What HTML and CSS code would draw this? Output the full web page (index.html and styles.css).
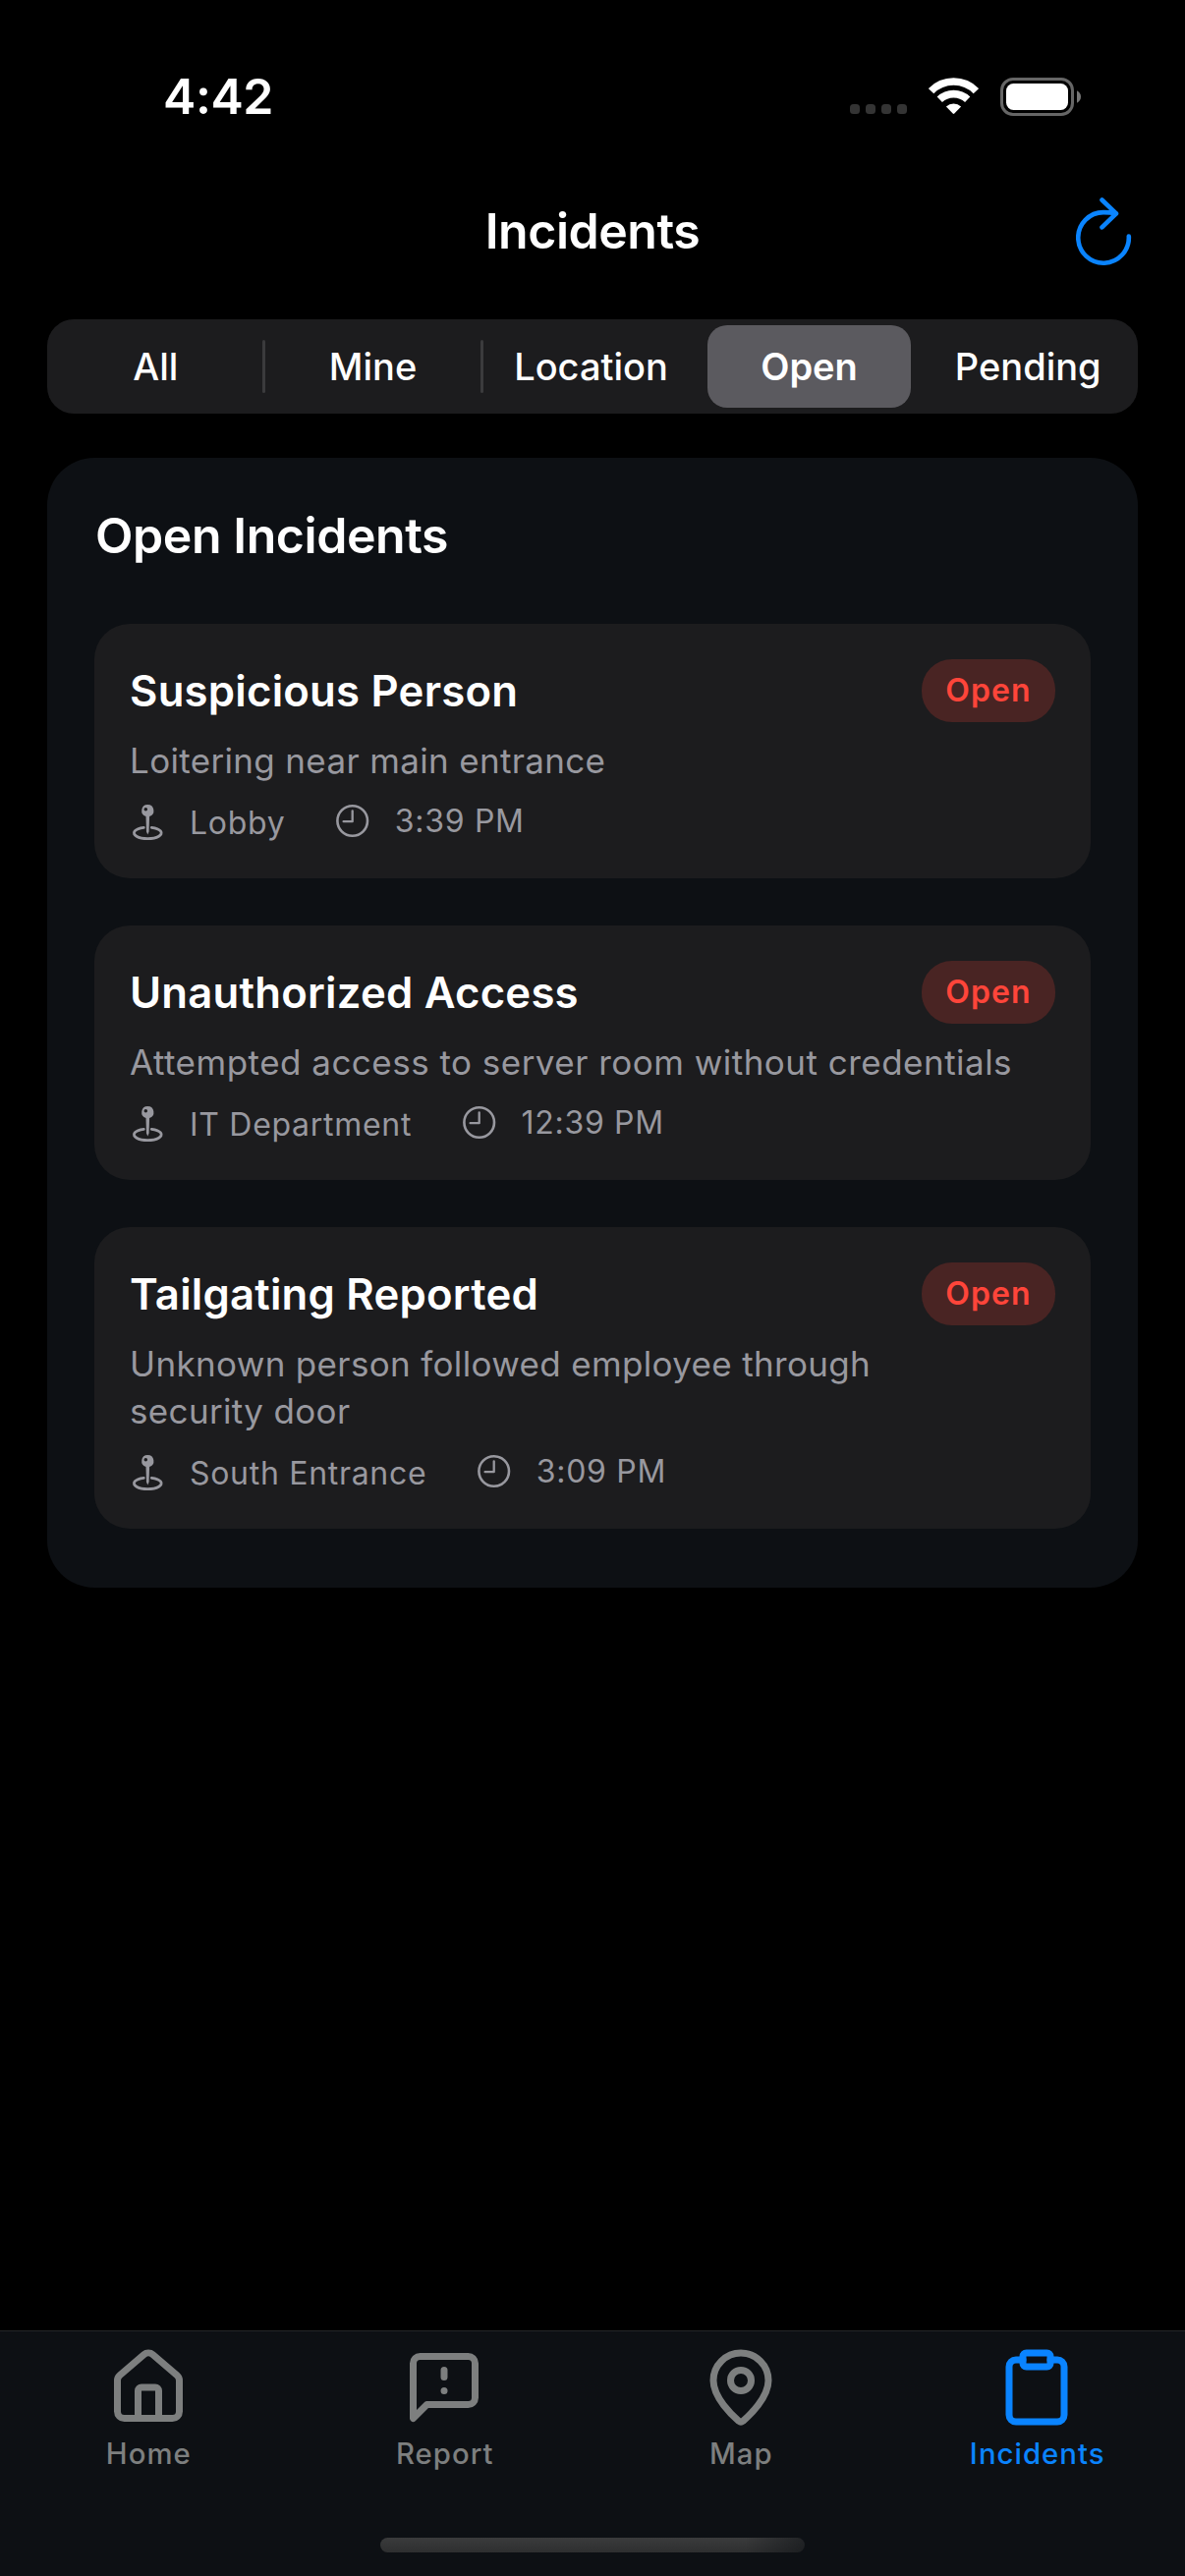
FILE: index.html
```html
<!DOCTYPE html>
<html lang="en">
<head>
<meta charset="utf-8">
<title>Incidents</title>
<link rel="stylesheet" href="styles.css">
</head>
<body>
<svg class="sprite" aria-hidden="true">
  <symbol id="pin" viewBox="0 0 37 41">
    <path fill="currentColor" fill-rule="evenodd" d="M18.3 1.9a6.2 6.2 0 0 1 1.8 12.1l-.5 15.4-1.3 3-1.3-3-.5-15.4A6.2 6.2 0 0 1 18.3 1.9zM16.3 4.9a1.8 1.8 0 1 0 0 3.6a1.8 1.8 0 1 0 0-3.6z"/>
    <path fill="none" stroke="currentColor" stroke-width="2.8" stroke-linecap="round" d="M14.3 25.3A13.9 5.8 0 1 0 22.3 25.3"/>
  </symbol>
  <symbol id="clock" viewBox="0 0 37 37">
    <g fill="none" stroke="currentColor" stroke-width="2.6" stroke-linecap="round" stroke-linejoin="round">
      <circle cx="18.7" cy="18.5" r="15.3"/>
      <path stroke-width="2.3" d="M18.7 8.3v10.9H9.6"/>
    </g>
  </symbol>
</svg>

<div class="screen">
  <div class="status">
    <span class="status-time">4:42</span>
    <div class="status-icons">
      <svg width="58" height="38" viewBox="0 0 58 38" fill="#343434">
        <rect x="0" y="27" width="10" height="10" rx="3.5"/>
        <rect x="16" y="27" width="10" height="10" rx="3.5"/>
        <rect x="32" y="27" width="10" height="10" rx="3.5"/>
        <rect x="48" y="27" width="10" height="10" rx="3.5"/>
      </svg>
      <svg width="51" height="38" viewBox="0 0 51 38">
        <g fill="none" stroke="#fff" stroke-width="7.6">
          <path d="M2.6 13.7A32 32 0 0 1 48.4 13.7"/>
          <path d="M11.3 22.3A20.5 20.5 0 0 1 39.7 22.3"/>
        </g>
        <path fill="#fff" d="M17.9 29.6A11 11 0 0 1 33.1 29.6L26.3 36.6Q25.5 37.4 24.7 36.6Z"/>
      </svg>
      <svg width="82" height="39" viewBox="0 0 82 39">
        <rect x="1.5" y="1.5" width="72" height="36" rx="11.5" fill="none" stroke="#666" stroke-width="3"/>
        <rect x="6" y="6" width="63" height="27" rx="7.5" fill="#fff"/>
        <path fill="#777" d="M78 13.2q4 2.2 4 6.3t-4 6.3z"/>
      </svg>
    </div>
  </div>

  <header class="nav">
    <h1 class="nav-title">Incidents</h1>
    <svg class="nav-refresh" width="57" height="70" viewBox="0 0 57 70">
      <path d="M53.8 39.5A25.8 25.8 0 1 1 28 15.1Q35 15.1 41 16.3M26.5 2.5L41 16.4 26.5 30.3"/>
    </svg>
  </header>

  <nav class="segments">
    <span class="segment segment-divided">All</span>
    <span class="segment segment-divided">Mine</span>
    <span class="segment">Location</span>
    <span class="segment segment-active">Open</span>
    <span class="segment segment-wide">Pending</span>
  </nav>

  <main class="panel">
    <h2 class="panel-title">Open Incidents</h2>
    <div class="cards">
      <article class="card">
        <div class="card-head"><h3 class="card-title">Suspicious Person</h3><span class="badge">Open</span></div>
        <p class="card-text">Loitering near main entrance</p>
        <div class="meta">
          <span class="meta-place"><svg width="37" height="41"><use href="#pin"/></svg>Lobby</span>
          <span class="meta-time"><svg width="37" height="37"><use href="#clock"/></svg>3:39 PM</span>
        </div>
      </article>
      <article class="card">
        <div class="card-head"><h3 class="card-title">Unauthorized Access</h3><span class="badge">Open</span></div>
        <p class="card-text card-text-long">Attempted access to server room without credentials</p>
        <div class="meta">
          <span class="meta-place"><svg width="37" height="41"><use href="#pin"/></svg>IT Department</span>
          <span class="meta-time"><svg width="37" height="37"><use href="#clock"/></svg>12:39 PM</span>
        </div>
      </article>
      <article class="card">
        <div class="card-head"><h3 class="card-title">Tailgating Reported</h3><span class="badge">Open</span></div>
        <p class="card-text">Unknown person followed employee through<br>security door</p>
        <div class="meta">
          <span class="meta-place"><svg width="37" height="41"><use href="#pin"/></svg>South Entrance</span>
          <span class="meta-time"><svg width="37" height="37"><use href="#clock"/></svg>3:09 PM</span>
        </div>
      </article>
    </div>
  </main>

  <footer class="tabbar">
    <div class="tabs">
      <div class="tab">
        <svg class="tab-icon" viewBox="0 0 24 24">
          <path d="M15 21v-8a1 1 0 0 0-1-1h-4a1 1 0 0 0-1 1v8"/>
          <path d="M3 10a2 2 0 0 1 .709-1.528l7-5.999a2 2 0 0 1 2.582 0l7 5.999A2 2 0 0 1 21 10v9a2 2 0 0 1-2 2H5a2 2 0 0 1-2-2z"/>
        </svg>
        <span class="tab-label">Home</span>
      </div>
      <div class="tab">
        <svg class="tab-icon" viewBox="0 0 24 24">
          <path d="M21 15a2 2 0 0 1-2 2H7l-4 4V5a2 2 0 0 1 2-2h14a2 2 0 0 1 2 2z"/>
          <path d="M12 7v2M12 13h.01"/>
        </svg>
        <span class="tab-label">Report</span>
      </div>
      <div class="tab">
        <svg class="tab-icon" viewBox="0 0 24 24">
          <path d="M20 10c0 4.993-5.539 10.193-7.399 11.799a1 1 0 0 1-1.202 0C9.539 20.193 4 14.993 4 10a8 8 0 0 1 16 0"/>
          <circle cx="12" cy="10" r="3"/>
        </svg>
        <span class="tab-label">Map</span>
      </div>
      <div class="tab tab-active">
        <svg class="tab-icon" viewBox="0 0 24 24">
          <rect x="8" y="2" width="8" height="4" rx="1"/>
          <path d="M16 4h2a2 2 0 0 1 2 2v14a2 2 0 0 1-2 2H6a2 2 0 0 1-2-2V6a2 2 0 0 1 2-2h2"/>
        </svg>
        <span class="tab-label">Incidents</span>
      </div>
    </div>
    <div class="home-indicator"></div>
  </footer>
</div>
</body>
</html>
```
FILE: styles.css
```css
* { box-sizing: border-box; margin: 0; padding: 0; }

body {
  background: #000;
  color: #fff;
  font-family: Inter, "Liberation Sans", sans-serif;
}

svg { display: block; flex: none; }

.sprite { display: none; }

.screen {
  display: flex;
  flex-direction: column;
  width: 1206px;
  height: 2622px;
  background: #000;
}

/* Status bar */
.status {
  display: flex;
  justify-content: space-between;
  align-items: flex-start;
  height: 162px;
  padding: 68px 106px 0 166px;
}

.status-time {
  font-size: 50px;
  font-weight: 600;
  line-height: 60px;
  letter-spacing: -0.4px;
}

.status-icons {
  display: flex;
  align-items: center;
  gap: 22px;
  height: 60px;
}

/* Navigation header */
.nav {
  display: grid;
  grid-template-columns: 1fr auto 1fr;
  align-items: center;
  height: 146px;
  padding: 0 54px;
}

.nav-title {
  grid-column: 2;
  font-size: 50px;
  font-weight: 600;
  line-height: 60px;
  letter-spacing: -0.47px;
}

.nav-refresh {
  justify-self: end;
  margin-top: 2px;
  fill: none;
  stroke: #0a84ff;
  stroke-width: 4.6;
  stroke-linecap: round;
  stroke-linejoin: round;
}

/* Filter control */
.segments {
  display: grid;
  grid-template-columns: 220.5px repeat(3, 222px) 1fr;
  height: 96px;
  margin: 17px 48px 0;
  border-radius: 27px;
  background: #1c1c1e;
  font-size: 38px;
  font-weight: 460;
}

.segment {
  position: relative;
  display: flex;
  align-items: center;
  justify-content: center;
}

.segment-divided::after {
  content: "";
  position: absolute;
  top: 21px;
  right: -1.5px;
  width: 3px;
  height: 54px;
  border-radius: 2px;
  background: #3b3b3d;
}

.segment-active {
  margin: 6px 7.5px;
  border-radius: 20px;
  background: #5b5a5f;
  font-weight: 590;
}

/* Incident list */
.panel {
  margin: 45px 48px 0;
  padding: 49px 48px 60px;
  border-radius: 48px;
  background: #0d1014;
}

.panel-title {
  margin-bottom: 60px;
  padding-left: 1px;
  font-size: 50px;
  font-weight: 600;
  line-height: 60px;
  letter-spacing: -0.43px;
}

.cards {
  display: flex;
  flex-direction: column;
  gap: 48px;
}

.card {
  padding: 36px;
  border-radius: 36px;
  background: #1c1c1e;
}

.card-head {
  display: flex;
  align-items: center;
  justify-content: space-between;
  height: 64px;
}

.card-title {
  font-size: 43.7px;
  font-weight: 600;
  letter-spacing: 0.22px;
}

.badge {
  display: flex;
  align-items: center;
  justify-content: center;
  width: 136px;
  height: 64px;
  padding-bottom: 1px;
  border-radius: 31px;
  background: #492423;
  color: #ff453a;
  font-size: 32px;
  font-weight: 560;
  letter-spacing: 1.1px;
}

.card-text {
  margin-top: 15px;
  color: #98989f;
  font-size: 35px;
  line-height: 48px;
  letter-spacing: 0.34px;
}

.card-text-long { letter-spacing: 0.48px; }

.meta {
  display: flex;
  align-items: flex-start;
  gap: 49.5px;
  margin-top: 19px;
  color: #98989f;
  font-size: 32px;
  letter-spacing: 0.7px;
}

.meta-place {
  display: flex;
  gap: 24px;
  line-height: 41px;
}

.meta-time {
  display: flex;
  gap: 25px;
  line-height: 37px;
}

/* Bottom tabs */
.tabbar {
  display: flex;
  flex-direction: column;
  align-items: center;
  height: 250px;
  margin-top: auto;
  padding: 15px 0 24px;
  border-top: 1px solid #242628;
  background: #0d1014;
}

.tabs {
  display: grid;
  grid-template-columns: repeat(4, 1fr);
  width: 100%;
}

.tab {
  display: flex;
  flex-direction: column;
  align-items: center;
  gap: 7px;
  color: #7d7f7f;
}

.tab-active { color: #0a84ff; }

.tab-icon {
  width: 84px;
  height: 84px;
  fill: none;
  stroke: currentColor;
  stroke-width: 2;
  stroke-linecap: round;
  stroke-linejoin: round;
}

.tab-label {
  padding-left: 1px;
  font-size: 29.3px;
  font-weight: 480;
  line-height: 37px;
  letter-spacing: 1.05px;
}

.home-indicator {
  width: 432px;
  height: 15px;
  margin-top: auto;
  border-radius: 8px;
  background:
    linear-gradient(to right, transparent 86%, rgba(13, 16, 20, 0.55)),
    linear-gradient(#3a3b3c, #2e2f30);
}
```
